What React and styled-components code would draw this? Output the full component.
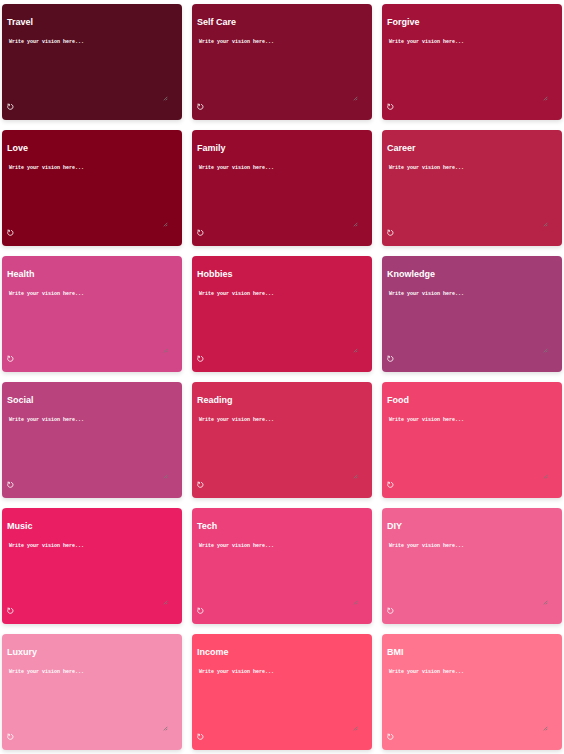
import React, { useState } from "react";
import styled, { createGlobalStyle } from "styled-components";

const GlobalStyle = createGlobalStyle`
  *, *::before, *::after { box-sizing: border-box; }
  body { margin: 0; background: #fff; font-family: "Liberation Sans", Arial, sans-serif; }
`;

const Board = styled.main`
  display: grid;
  grid-template-columns: repeat(3, minmax(0, 1fr));
  grid-auto-rows: minmax(116px, 1fr);
  gap: 10px;
  min-height: 100vh;
  padding: 4px 2px;
`;

const Card = styled.section`
  display: flex;
  flex-direction: column;
  align-items: flex-start;
  padding: 13px 14px 9px 5px;
  border-radius: 4px;
  background: ${({ $color }) => $color};
  color: #fff;
  box-shadow: 0 2px 4px rgba(0, 0, 0, 0.12);
`;

const Title = styled.label`
  font-size: 9px;
  line-height: 10px;
  font-weight: 700;
`;

const NoteField = styled.div`
  position: relative;
  display: flex;
  flex: 1;
  align-self: stretch;
  margin-top: 10px;
`;

const Note = styled.textarea`
  flex: 1;
  min-width: 0;
  height: auto;
  margin: 0;
  padding: 2px;
  border: 0;
  outline: 0;
  resize: none;
  background: transparent;
  color: inherit;
  font-family: "Liberation Mono", "Courier New", monospace;
  font-size: 5px;
  font-weight: 700;
  line-height: 6px;

  &::placeholder { color: #fff; opacity: 1; }
`;

const Grip = styled.svg`
  position: absolute;
  right: 0;
  bottom: 0;
  width: 5px;
  height: 5px;
  pointer-events: none;
`;

const ResetButton = styled.button`
  display: flex;
  align-items: center;
  height: 10px;
  margin: 0;
  padding: 0;
  border: 0;
  background: transparent;
  color: inherit;
  cursor: pointer;
`;

const ResetIcon = styled.svg`
  width: 7px;
  height: 7px;
  fill: none;
  stroke: currentColor;
  stroke-width: 0.8;
`;

const topics = [
  ["Travel", "#560d20"],
  ["Self Care", "#800e2c"],
  ["Forgive", "#a31239"],
  ["Love", "#80001c"],
  ["Family", "#960a2e"],
  ["Career", "#b62346"],
  ["Health", "#d24787"],
  ["Hobbies", "#c9184a"],
  ["Knowledge", "#a23e75"],
  ["Social", "#b9437c"],
  ["Reading", "#d12d55"],
  ["Food", "#ef426c"],
  ["Music", "#e91e63"],
  ["Tech", "#ec407a"],
  ["DIY", "#f06292"],
  ["Luxury", "#f48fb1"],
  ["Income", "#ff4d6d"],
  ["BMI", "#ff758f"],
];

function VisionCard({ name, color }) {
  const [text, setText] = useState("");
  const id = "vision-" + name.toLowerCase().replace(" ", "-");
  return (
    <Card $color={color}>
      <Title htmlFor={id}>{name}</Title>
      <NoteField>
        <Note
          id={id}
          placeholder="Write your vision here..."
          value={text}
          onChange={(e) => setText(e.target.value)}
        />
        <Grip viewBox="0 0 5 5" aria-hidden="true">
          <path d="M0.8 4.3 4.3 0.8M2.8 4.3 4.3 2.8" stroke="#777" strokeWidth="0.8" />
        </Grip>
      </NoteField>
      <ResetButton type="button" aria-label={"Reset " + name} onClick={() => setText("")}>
        <ResetIcon viewBox="0 0 7 7" aria-hidden="true">
          <path d="M0.4 1.2H2.3V3.1M2.2 1.3C0.3 2.6 0.3 4.7 1.6 5.7S4.9 6.5 5.7 5 5.7 1.9 4.1 1.3" />
        </ResetIcon>
      </ResetButton>
    </Card>
  );
}

export default function App() {
  return (
    <>
      <GlobalStyle />
      <Board>
        {topics.map(([name, color]) => (
          <VisionCard key={name} name={name} color={color} />
        ))}
      </Board>
    </>
  );
}
